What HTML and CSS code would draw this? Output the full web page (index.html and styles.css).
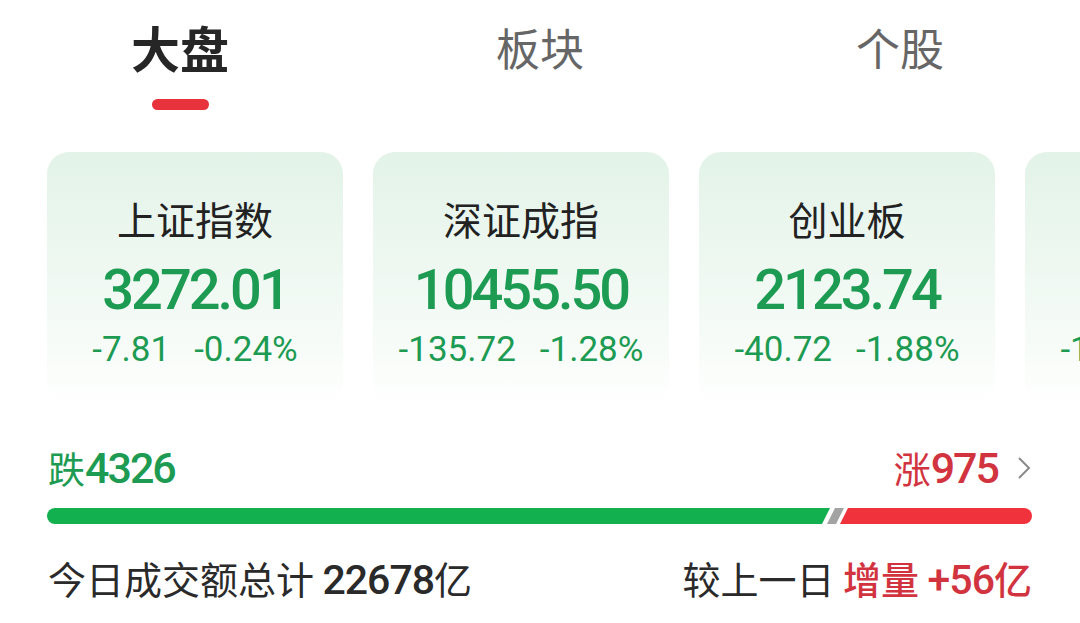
FILE: index.html
```html
<!DOCTYPE html>
<html lang="zh-CN">
<head>
<meta charset="utf-8">
<title>大盘</title>
<link rel="stylesheet" href="styles.css">
</head>
<body>
<div class="page">
  <nav class="tabs">
    <div class="tab active"><span class="tab-label">大盘</span><span class="indicator"></span></div>
    <div class="tab"><span class="tab-label">板块</span></div>
    <div class="tab"><span class="tab-label">个股</span></div>
  </nav>

  <section class="cards">
    <div class="card">
      <div class="card-title">上证指数</div>
      <div class="card-value">3272.01</div>
      <div class="card-change"><span>-7.81</span><span>-0.24%</span></div>
    </div>
    <div class="card">
      <div class="card-title">深证成指</div>
      <div class="card-value">10455.50</div>
      <div class="card-change"><span>-135.72</span><span>-1.28%</span></div>
    </div>
    <div class="card">
      <div class="card-title">创业板</div>
      <div class="card-value">2123.74</div>
      <div class="card-change"><span>-40.72</span><span>-1.88%</span></div>
    </div>
    <div class="card">
      <div class="card-title">科创50</div>
      <div class="card-value">1012.36</div>
      <div class="card-change"><span>-15.27</span><span>-1.49%</span></div>
    </div>
  </section>

  <div class="breadth">
    <div class="fall"><span class="cjk">跌</span><span class="num">4326</span></div>
    <div class="rise"><span class="cjk">涨</span><span class="num">975</span>
      <svg class="chev" width="16" height="26" viewBox="0 0 16 26"><polyline points="3,3 13,13 3,23" fill="none" stroke="#8a8a8a" stroke-width="2"/></svg>
    </div>
  </div>

  <div class="bar">
    <svg width="985" height="16" viewBox="0 0 985 16">
      <path d="M8 0 H783 L775 16 H8 A8 8 0 0 1 8 0 Z" fill="#12b04f"/>
      <path d="M788 0 H797 L789 16 H780 Z" fill="#a3a3a3"/>
      <path d="M801 0 H977 A8 8 0 0 1 977 16 H793 Z" fill="#f0323c"/>
    </svg>
  </div>

  <div class="turnover">
    <div class="total">今日成交额总计 <span class="num">22678</span>亿</div>
    <div class="compare">较上一日 <span class="red">增量 <span class="num">+56</span>亿</span></div>
  </div>
</div>
</body>
</html>
```

FILE: styles.css
```css
html, body {
  margin: 0;
  padding: 0;
  background: #ffffff;
  overflow: hidden;
}

.page {
  width: 1080px;
  height: 623px;
  overflow: hidden;
  font-family: "Noto Sans CJK SC", "Noto Sans", sans-serif;
  color: #2a2a2a;
}

.tabs {
  display: flex;
  padding-top: 17px;
  height: 111px;
  box-sizing: border-box;
}

.tab {
  flex: 1;
  display: flex;
  flex-direction: column;
  align-items: center;
}

.tab-label {
  font-size: 44px;
  line-height: 60px;
  color: #666666;
}

.tab.active .tab-label {
  font-size: 49px;
  font-weight: 700;
  color: #262626;
}

.indicator {
  display: block;
  width: 57px;
  height: 11px;
  margin-top: 22px;
  border-radius: 6px;
  background: #e8323c;
}

.cards {
  display: flex;
  gap: 30px;
  padding-left: 47px;
  margin-top: 41px;
  overflow: hidden;
}

.card {
  flex: 0 0 296px;
  height: 253px;
  border-radius: 22px;
  background: linear-gradient(180deg, #e3f3e8 0%, #eef8f1 45%, #f8fcf9 80%, #ffffff 100%);
  display: flex;
  flex-direction: column;
  align-items: center;
  padding-top: 44px;
  box-sizing: border-box;
}

.card-title {
  font-size: 39px;
  line-height: 44px;
  font-weight: 400;
  color: #222222;
}

.card-value {
  margin-top: 20px;
  font-family: Roboto, "Noto Sans", sans-serif;
  font-size: 56px;
  line-height: 60px;
  font-weight: 500;
  letter-spacing: -3px;
  color: #1d9b53;
}

.card-change {
  margin-top: 2px;
  display: flex;
  gap: 24px;
  font-family: Roboto, "Noto Sans", sans-serif;
  font-size: 35px;
  line-height: 56px;
  color: #1d9b53;
  letter-spacing: 0;
}

.breadth {
  display: flex;
  justify-content: space-between;
  align-items: center;
  padding: 0 48px;
  margin-top: 41px;
  height: 44px;
}

.breadth .cjk {
  font-size: 37px;
  line-height: 44px;
}

.breadth .num {
  font-family: Roboto, "Noto Sans", sans-serif;
  font-size: 43px;
  line-height: 44px;
  font-weight: 500;
  letter-spacing: -2px;
}

.fall {
  color: #1d9b53;
  display: flex;
  align-items: center;
}

.rise {
  color: #d2343f;
  display: flex;
  align-items: center;
}

.chev {
  display: block;
  margin-left: 18px;
}

.bar {
  margin-top: 18px;
  padding-left: 47px;
  height: 16px;
}

.bar svg {
  display: block;
}

.turnover {
  display: flex;
  justify-content: space-between;
  align-items: center;
  padding: 0 48px 0 48px;
  margin-top: 31px;
  height: 48px;
  font-size: 38px;
  line-height: 48px;
  color: #2a2a2a;
}

.turnover .num {
  font-family: Roboto, "Noto Sans", sans-serif;
  font-weight: 500;
  font-size: 41px;
  letter-spacing: -1px;
}

.compare .red {
  color: #d2343f;
  font-weight: 500;
}
```
